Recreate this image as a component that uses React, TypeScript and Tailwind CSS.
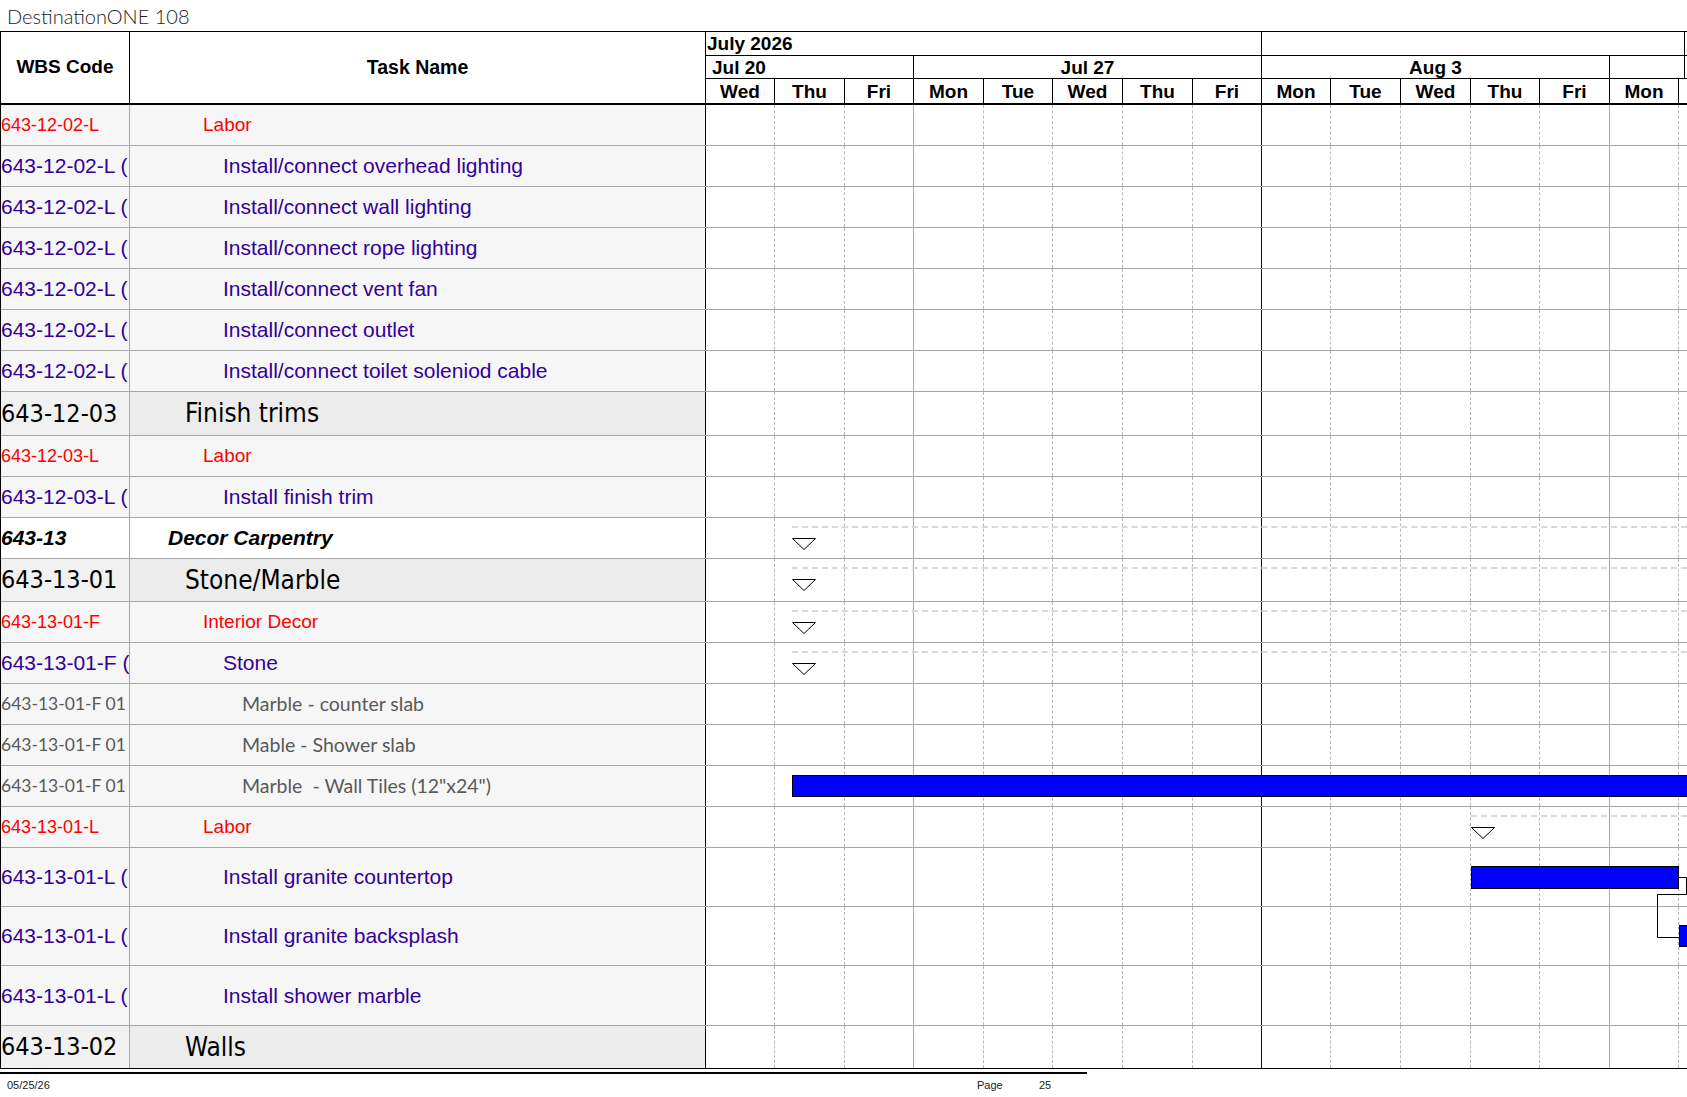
import React from 'react';

type Kind = 'labor' | 'task' | 'group' | 'summary' | 'item';

interface Row {
  code: string;
  name: string;
  kind: Kind;
  h: string;
  marker?: 'start' | 'late';
  bar?: 'tiles' | 'counter' | 'splash';
  connector?: boolean;
}

const rows: Row[] = [
  { code: '643-12-02-L', name: 'Labor', kind: 'labor', h: 'h-[41px]' },
  { code: '643-12-02-L (', name: 'Install/connect overhead lighting', kind: 'task', h: 'h-[41px]' },
  { code: '643-12-02-L (', name: 'Install/connect wall lighting', kind: 'task', h: 'h-[41px]' },
  { code: '643-12-02-L (', name: 'Install/connect rope lighting', kind: 'task', h: 'h-[41px]' },
  { code: '643-12-02-L (', name: 'Install/connect vent fan', kind: 'task', h: 'h-[41px]' },
  { code: '643-12-02-L (', name: 'Install/connect outlet', kind: 'task', h: 'h-[41px]' },
  { code: '643-12-02-L (', name: 'Install/connect toilet soleniod cable', kind: 'task', h: 'h-[41px]' },
  { code: '643-12-03', name: 'Finish trims', kind: 'group', h: 'h-[44px]' },
  { code: '643-12-03-L', name: 'Labor', kind: 'labor', h: 'h-[41px]' },
  { code: '643-12-03-L (', name: 'Install finish trim', kind: 'task', h: 'h-[41px]' },
  { code: '643-13', name: 'Decor Carpentry', kind: 'summary', h: 'h-[41px]', marker: 'start' },
  { code: '643-13-01', name: 'Stone/Marble', kind: 'group', h: 'h-[43px]', marker: 'start' },
  { code: '643-13-01-F', name: 'Interior Decor', kind: 'labor', h: 'h-[41px]', marker: 'start' },
  { code: '643-13-01-F (', name: 'Stone', kind: 'task', h: 'h-[41px]', marker: 'start' },
  { code: '643-13-01-F 01', name: 'Marble - counter slab', kind: 'item', h: 'h-[41px]' },
  { code: '643-13-01-F 01', name: 'Mable - Shower slab', kind: 'item', h: 'h-[41px]' },
  { code: '643-13-01-F 01', name: 'Marble  - Wall Tiles (12"x24")', kind: 'item', h: 'h-[41px]', bar: 'tiles' },
  { code: '643-13-01-L', name: 'Labor', kind: 'labor', h: 'h-[41px]', marker: 'late' },
  { code: '643-13-01-L (', name: 'Install granite countertop', kind: 'task', h: 'h-[59px]', bar: 'counter', connector: true },
  { code: '643-13-01-L (', name: 'Install granite backsplash', kind: 'task', h: 'h-[59px]', bar: 'splash' },
  { code: '643-13-01-L (', name: 'Install shower marble', kind: 'task', h: 'h-[60px]' },
  { code: '643-13-02', name: 'Walls', kind: 'group', h: 'h-[43px]' },
];

const codeStyle: Record<Kind, string> = {
  labor: "text-[18px] text-[#ff0000] font-['Liberation_Sans',sans-serif]",
  task: "text-[21px] text-[#330099] font-['Liberation_Sans',sans-serif]",
  group: "text-[25px] text-black font-['DejaVu_Sans_Condensed','DejaVu_Sans',sans-serif] [font-stretch:condensed]",
  summary: "text-[21px] text-black font-bold italic font-['Liberation_Sans',sans-serif]",
  item: "text-[17.5px] text-[#595959] font-['Lato',sans-serif]",
};

const nameStyle: Record<Kind, string> = {
  labor: "text-[19px] text-[#ff0000] font-['Liberation_Sans',sans-serif]",
  task: "text-[21px] text-[#330099] font-['Liberation_Sans',sans-serif]",
  group: "text-[26px] text-black font-['DejaVu_Sans_Condensed','DejaVu_Sans',sans-serif] [font-stretch:condensed]",
  summary: "text-[21px] text-black font-bold italic font-['Liberation_Sans',sans-serif]",
  item: "text-[19.5px] text-[#595959] font-['Lato',sans-serif]",
};

const indent: Record<Kind, string> = {
  summary: 'pl-[38px]',
  group: 'pl-[55px]',
  labor: 'pl-[73px]',
  task: 'pl-[93px]',
  item: 'pl-[112px]',
};

// Wed Thu Fri | Mon Tue Wed Thu Fri | Mon Tue Wed Thu Fri | Mon
const days = [
  { d: 'Wed', w: 'w-[69px]', line: 'border-dashed border-[#b8b8b8]' },
  { d: 'Thu', w: 'w-[70px]', line: 'border-dashed border-[#b8b8b8]' },
  { d: 'Fri', w: 'w-[69px]', line: 'border-solid border-[#a8a8a8]' },
  { d: 'Mon', w: 'w-[70px]', line: 'border-dashed border-[#b8b8b8]' },
  { d: 'Tue', w: 'w-[69px]', line: 'border-dashed border-[#b8b8b8]' },
  { d: 'Wed', w: 'w-[70px]', line: 'border-dashed border-[#b8b8b8]' },
  { d: 'Thu', w: 'w-[70px]', line: 'border-dashed border-[#b8b8b8]' },
  { d: 'Fri', w: 'w-[69px]', line: 'border-solid border-[#000080]' },
  { d: 'Mon', w: 'w-[69px]', line: 'border-dashed border-[#b8b8b8]' },
  { d: 'Tue', w: 'w-[70px]', line: 'border-dashed border-[#b8b8b8]' },
  { d: 'Wed', w: 'w-[70px]', line: 'border-dashed border-[#b8b8b8]' },
  { d: 'Thu', w: 'w-[69px]', line: 'border-dashed border-[#b8b8b8]' },
  { d: 'Fri', w: 'w-[70px]', line: 'border-solid border-[#a8a8a8]' },
  { d: 'Mon', w: 'w-[69px]', line: 'border-dashed border-[#b8b8b8]' },
];

function Triangle() {
  return (
    <svg width="24" height="12" viewBox="0 0 24 12">
      <polygon points="0.5,0.5 23.5,0.5 12,11.5" fill="white" stroke="black" strokeWidth="1" />
    </svg>
  );
}

function GanttCell({ row }: { row: Row }) {
  return (
    <div className="relative flex w-[981px] h-full bg-white">
      {days.map((day, i) => (
        <div key={i} className={`${day.w} h-full shrink-0 border-r ${day.line}`} />
      ))}
      <div className="flex-1" />

      {row.marker === 'start' && (
        <>
          <div className="absolute top-[8px] left-[86px] right-0 border-t-2 border-dashed border-[#d8d8d8]" />
          <div className="absolute top-[20px] left-[86px] flex">
            <Triangle />
          </div>
        </>
      )}
      {row.marker === 'late' && (
        <>
          <div className="absolute top-[8px] left-[765px] right-0 border-t-2 border-dashed border-[#d8d8d8]" />
          <div className="absolute top-[20px] left-[765px] flex">
            <Triangle />
          </div>
        </>
      )}

      {row.bar === 'tiles' && (
        <div className="absolute top-[9px] left-[86px] right-[-2px] h-[22px] bg-[#0000ff] border border-black" />
      )}
      {row.bar === 'counter' && (
        <div className="absolute top-[18px] left-[765px] w-[208px] h-[23px] bg-[#0000ff] border border-black" />
      )}
      {row.bar === 'splash' && (
        <div className="absolute top-[18px] left-[973px] right-[-2px] h-[22px] bg-[#0000ff] border border-black z-20" />
      )}
      {row.connector && (
        <svg className="absolute top-0 left-[940px] overflow-visible z-10" width="41" height="100" viewBox="0 0 41 100">
          <polyline
            points="33,29.5 40.5,29.5 40.5,46.5 11.5,46.5 11.5,89.5 33,89.5"
            fill="none"
            stroke="black"
            strokeWidth="1"
          />
        </svg>
      )}
    </div>
  );
}

function BodyRow({ row, last }: { row: Row; last: boolean }) {
  const white = row.kind === 'summary';
  const wbsBg = white ? 'bg-white' : row.kind === 'group' ? 'bg-[#f1f1f1]' : 'bg-[#f6f6f6]';
  const taskBg = white ? 'bg-white' : row.kind === 'group' ? 'bg-[#ececec]' : 'bg-[#f6f6f6]';
  return (
    <div className={`flex ${row.h} border-b ${last ? 'border-black' : 'border-[#a6a6a6]'}`}>
      <div className={`w-[129px] shrink-0 flex items-center overflow-hidden whitespace-nowrap border-r border-[#a6a6a6] ${wbsBg} ${codeStyle[row.kind]}`}>
        {row.code}
      </div>
      <div className={`w-[576px] shrink-0 flex items-center whitespace-pre border-r border-black ${taskBg} ${indent[row.kind]} ${nameStyle[row.kind]}`}>
        {row.name}
      </div>
      <GanttCell row={row} />
    </div>
  );
}

function Header() {
  return (
    <div className="flex h-[74px] border-t border-b-2 border-black font-['Liberation_Sans',sans-serif] font-bold text-[19px] text-black bg-white">
      <div className="w-[129px] shrink-0 flex items-center justify-center border-r border-black">WBS Code</div>
      <div className="w-[576px] shrink-0 flex items-center justify-center border-r border-black text-[19.5px]">Task Name</div>
      <div className="w-[981px] flex flex-col">
        <div className="flex h-[24px] border-b border-black">
          <div className="w-[556px] shrink-0 flex items-center pl-[1px] border-r border-black leading-none">July 2026</div>
          <div className="flex-1 border-r border-black mr-[2px]" />
        </div>
        <div className="flex h-[23px] border-b border-black">
          <div className="w-[208px] shrink-0 flex items-center pl-[6px] border-r border-black leading-none">Jul 20</div>
          <div className="w-[348px] shrink-0 flex items-center justify-center border-r border-black leading-none">Jul 27</div>
          <div className="w-[348px] shrink-0 flex items-center justify-center border-r border-black leading-none">Aug 3</div>
          <div className="flex-1 border-r border-black mr-[2px]" />
        </div>
        <div className="flex flex-1">
          {days.map((day, i) => (
            <div key={i} className={`${day.w} shrink-0 flex items-center justify-center border-r border-black leading-none`}>
              {day.d}
            </div>
          ))}
          <div className="flex-1" />
        </div>
      </div>
    </div>
  );
}

export default function App() {
  return (
    <div className="w-[1687px] h-[1097px] bg-white overflow-hidden flex flex-col">
      <div className="h-[31px] flex items-center pl-[7px] text-[20px] font-light text-[#222] font-['Lato',sans-serif]">
        DestinationONE 108
      </div>

      <div className="border-l border-black">
        <Header />
        {rows.map((row, i) => (
          <BodyRow key={i} row={row} last={i === rows.length - 1} />
        ))}
      </div>

      <div className="mt-[3px] w-[1087px] border-t-2 border-black" />
      <div className="flex items-center h-[22px] text-[11px] text-[#222] font-['Liberation_Sans',sans-serif]">
        <span className="w-[977px] pl-[7px]">05/25/26</span>
        <span className="w-[62px]">Page</span>
        <span>25</span>
      </div>
    </div>
  );
}
